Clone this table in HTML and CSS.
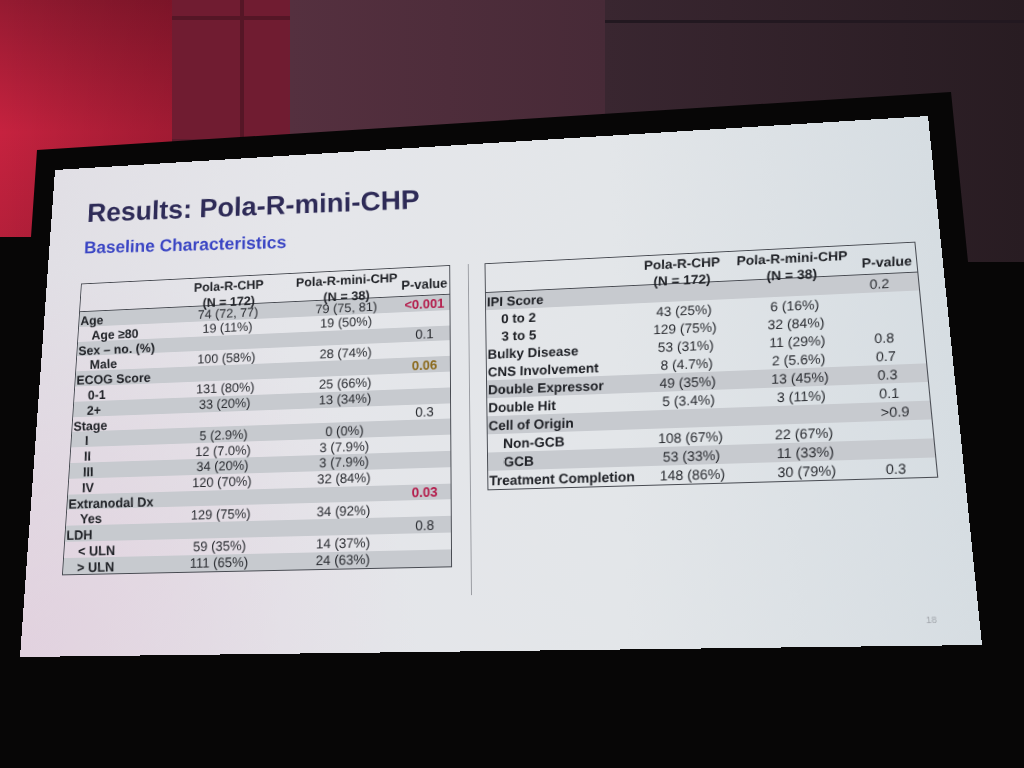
FILE: index.html
```html
<!DOCTYPE html>
<html lang="en">
<head>
<meta charset="utf-8">
<title>Results: Pola-R-mini-CHP</title>
<link rel="stylesheet" href="styles.css">
</head>
<body>
<div class="scene">
  <svg class="bg" viewBox="0 0 1024 768" width="1024" height="768" aria-hidden="true">
    <defs>
      <linearGradient id="red" x1="0" y1="0" x2="0" y2="1">
        <stop offset="0" stop-color="#951a31"/>
        <stop offset="0.55" stop-color="#c6223f"/>
        <stop offset="1" stop-color="#b51f3a"/>
      </linearGradient>
      <linearGradient id="redH" x1="0" y1="0" x2="1" y2="0">
        <stop offset="0" stop-color="#000" stop-opacity="0"/>
        <stop offset="1" stop-color="#200008" stop-opacity="0.22"/>
      </linearGradient>
      <linearGradient id="wallR" x1="0" y1="0" x2="1" y2="0">
        <stop offset="0" stop-color="#392630"/>
        <stop offset="1" stop-color="#281c22"/>
      </linearGradient>
      <linearGradient id="mauve" x1="0" y1="0" x2="1" y2="0">
        <stop offset="0" stop-color="#55303f"/>
        <stop offset="1" stop-color="#472a37"/>
      </linearGradient>
    </defs>
    <rect width="1024" height="768" fill="#2b1e25"/>
    <rect x="605" y="0" width="419" height="270" fill="url(#wallR)"/>
    <rect x="605" y="20" width="419" height="3" fill="#221820"/>
    <rect x="290" y="0" width="315" height="139" fill="url(#mauve)"/>
    <rect x="290" y="139" width="315" height="70" fill="#3b2430"/>
    <rect x="170" y="0" width="120" height="139" fill="#701c31"/>
    <rect x="240" y="0" width="4" height="139" fill="#551626"/>
    <rect x="170" y="16" width="120" height="4" fill="#551626"/>
    <rect x="170" y="139" width="120" height="70" fill="#5a1b2c"/>
    <rect x="0" y="0" width="172" height="240" fill="url(#red)"/>
    <rect x="0" y="0" width="172" height="240" fill="url(#redH)"/>
    <polygon points="37,150 951,92 968,262 1024,262 1024,768 0,768 0,237 31,237" fill="#070606"/>
  </svg>

  <div class="slide">
    <h1 class="title">Results: Pola-R-mini-CHP</h1>
    <h2 class="subtitle">Baseline Characteristics</h2>

    <div class="tables">
      <div class="tbl tbl-left">
        <div class="thead">
          <div class="c"></div>
          <div class="c">Pola-R-CHP<br>(N = 172)</div>
          <div class="c">Pola-R-mini-CHP<br>(N = 38)</div>
          <div class="c pv">P-value</div>
        </div>
        <div class="r g"><span class="lbl">Age</span><span class="v">74 (72, 77)</span><span class="v">79 (75, 81)</span><span class="p red">&lt;0.001</span></div>
        <div class="r"><span class="lbl ind">Age ≥80</span><span class="v">19 (11%)</span><span class="v">19 (50%)</span><span class="p"></span></div>
        <div class="r g"><span class="lbl">Sex – no. (%)</span><span class="v"></span><span class="v"></span><span class="p">0.1</span></div>
        <div class="r"><span class="lbl ind">Male</span><span class="v">100 (58%)</span><span class="v">28 (74%)</span><span class="p"></span></div>
        <div class="r g"><span class="lbl">ECOG Score</span><span class="v"></span><span class="v"></span><span class="p gold">0.06</span></div>
        <div class="r"><span class="lbl ind">0-1</span><span class="v">131 (80%)</span><span class="v">25 (66%)</span><span class="p"></span></div>
        <div class="r g"><span class="lbl ind">2+</span><span class="v">33 (20%)</span><span class="v">13 (34%)</span><span class="p"></span></div>
        <div class="r"><span class="lbl">Stage</span><span class="v"></span><span class="v"></span><span class="p">0.3</span></div>
        <div class="r g"><span class="lbl ind">I</span><span class="v">5 (2.9%)</span><span class="v">0 (0%)</span><span class="p"></span></div>
        <div class="r"><span class="lbl ind">II</span><span class="v">12 (7.0%)</span><span class="v">3 (7.9%)</span><span class="p"></span></div>
        <div class="r g"><span class="lbl ind">III</span><span class="v">34 (20%)</span><span class="v">3 (7.9%)</span><span class="p"></span></div>
        <div class="r"><span class="lbl ind">IV</span><span class="v">120 (70%)</span><span class="v">32 (84%)</span><span class="p"></span></div>
        <div class="r g"><span class="lbl">Extranodal Dx</span><span class="v"></span><span class="v"></span><span class="p red">0.03</span></div>
        <div class="r"><span class="lbl ind">Yes</span><span class="v">129 (75%)</span><span class="v">34 (92%)</span><span class="p"></span></div>
        <div class="r g"><span class="lbl">LDH</span><span class="v"></span><span class="v"></span><span class="p">0.8</span></div>
        <div class="r"><span class="lbl ind">&lt; ULN</span><span class="v">59 (35%)</span><span class="v">14 (37%)</span><span class="p"></span></div>
        <div class="r g"><span class="lbl ind">&gt; ULN</span><span class="v">111 (65%)</span><span class="v">24 (63%)</span><span class="p"></span></div>
      </div>

      <div class="divider"></div>

      <div class="tbl tbl-right">
        <div class="thead">
          <div class="c"></div>
          <div class="c">Pola-R-CHP<br>(N = 172)</div>
          <div class="c">Pola-R-mini-CHP<br>(N = 38)</div>
          <div class="c pv">P-value</div>
        </div>
        <div class="r g"><span class="lbl">IPI Score</span><span class="v"></span><span class="v"></span><span class="p">0.2</span></div>
        <div class="r"><span class="lbl ind">0 to 2</span><span class="v">43 (25%)</span><span class="v">6 (16%)</span><span class="p"></span></div>
        <div class="r"><span class="lbl ind">3 to 5</span><span class="v">129 (75%)</span><span class="v">32 (84%)</span><span class="p"></span></div>
        <div class="r"><span class="lbl">Bulky Disease</span><span class="v">53 (31%)</span><span class="v">11 (29%)</span><span class="p">0.8</span></div>
        <div class="r"><span class="lbl">CNS Involvement</span><span class="v">8 (4.7%)</span><span class="v">2 (5.6%)</span><span class="p">0.7</span></div>
        <div class="r g"><span class="lbl">Double Expressor</span><span class="v">49 (35%)</span><span class="v">13 (45%)</span><span class="p">0.3</span></div>
        <div class="r"><span class="lbl">Double Hit</span><span class="v">5 (3.4%)</span><span class="v">3 (11%)</span><span class="p">0.1</span></div>
        <div class="r g"><span class="lbl">Cell of Origin</span><span class="v"></span><span class="v"></span><span class="p">&gt;0.9</span></div>
        <div class="r"><span class="lbl ind">Non-GCB</span><span class="v">108 (67%)</span><span class="v">22 (67%)</span><span class="p"></span></div>
        <div class="r g"><span class="lbl ind">GCB</span><span class="v">53 (33%)</span><span class="v">11 (33%)</span><span class="p"></span></div>
        <div class="r"><span class="lbl">Treatment Completion</span><span class="v">148 (86%)</span><span class="v">30 (79%)</span><span class="p">0.3</span></div>
      </div>
    </div>

    <div class="pnum">18</div>
  </div>
</div>
</body>
</html>
```

FILE: styles.css
```css
html, body {
  margin: 0;
  padding: 0;
  background: #070606;
}

.scene {
  position: relative;
  width: 1024px;
  height: 768px;
  overflow: hidden;
}

.bg {
  display: block;
  width: 1024px;
  height: 768px;
}

/* the projected slide: flat 960x540 canvas, mapped onto the photographed screen */
.slide {
  position: absolute;
  left: 0;
  top: 0;
  width: 960px;
  height: 540px;
  box-sizing: border-box;
  padding-top: 37px;
  display: flex;
  flex-direction: column;
  transform-origin: 0 0;
  transform: matrix3d(0.830698, -0.066084, 0, -0.0000847813,
                      -0.068072, 0.794852, 0, -0.000162865,
                      0, 0, 1, 0,
                      55, 170, 0, 1);
  font-family: "Liberation Sans", Arial, sans-serif;
  background:
    radial-gradient(circle at 0% 100%, rgba(226, 204, 220, 0.7), rgba(226, 204, 220, 0) 38%),
    linear-gradient(90deg, #e1dfe5 0%, #e5e6ea 30%, #e3e6e9 65%, #d6dde2 100%);
}

.title {
  align-self: flex-start;
  margin: 0 0 0 42px;
  font-size: 31px;
  line-height: 36px;
  font-weight: 700;
  color: #2e2b57;
  transform-origin: 0 50%;
  transform: rotate(0.9deg) skewX(1.9deg);
}

.subtitle {
  align-self: flex-start;
  margin: 10px 0 0 41px;
  font-size: 20px;
  line-height: 24px;
  font-weight: 700;
  color: #3a45c4;
  transform-origin: 0 50%;
  transform: rotate(1.5deg) skewX(2.6deg);
}

.tables {
  display: flex;
  align-items: flex-start;
  margin-top: 30px;
  padding-left: 40px;
}

.tbl {
  box-sizing: border-box;
  border: 1px solid #474a51;
  font-size: 14px;
  color: #1f2126;
}

.tbl-left { width: 414px; }
.tbl-right { width: 444px; }

.tbl-left .thead,
.tbl-left .r {
  grid-template-columns: 96px 146px 116px 54px;
}

.tbl-right .thead,
.tbl-right .r {
  grid-template-columns: 160px 92px 132px 58px;
}

.tbl-left .thead > :nth-child(1),
.tbl-left .r > :nth-child(1) { transform: skewX(3.8deg); }
.tbl-left .thead > :nth-child(2),
.tbl-left .r > :nth-child(2) { transform: skewX(2.1deg); }
.tbl-left .thead > :nth-child(3),
.tbl-left .r > :nth-child(3) { transform: skewX(0.8deg); }

.tbl-right .thead > :nth-child(1),
.tbl-right .r > :nth-child(1) { transform: skewX(-1.6deg); }
.tbl-right .thead > :nth-child(2),
.tbl-right .r > :nth-child(2) { transform: skewX(-2.7deg); }
.tbl-right .thead > :nth-child(3),
.tbl-right .r > :nth-child(3) { transform: skewX(-3.9deg); }
.tbl-right .thead > :nth-child(4),
.tbl-right .r > :nth-child(4) { transform: skewX(-4.7deg); }

.divider {
  width: 1px;
  height: 348px;
  margin: 0 17px 0 19px;
  background: #9a9ca2;
}

.thead {
  display: grid;
  height: 32px;
  box-sizing: border-box;
  border-bottom: 1px solid #474a51;
  font-weight: 700;
}

.thead .c {
  line-height: 18px;
  padding-top: 0.5px;
  text-align: center;
  white-space: nowrap;
}

.thead .pv {
  padding-top: 9.6px;
}

.r {
  display: grid;
  align-items: center;
}

.tbl-left .r { height: 16.8px; }
.tbl-right .r { height: 19px; }

.r.g { background: #c7cacf; }

.lbl {
  font-weight: 700;
  padding-left: 1px;
  line-height: 14px;
  white-space: nowrap;
}

.tbl-left .lbl { padding-top: 3px; }

.lbl.ind { padding-left: 15px; }
.tbl-right .lbl.ind { padding-left: 16px; }

.v {
  text-align: center;
  line-height: 14px;
  white-space: nowrap;
  color: #292b30;
}

.p {
  text-align: center;
  line-height: 14px;
  white-space: nowrap;
  color: #292b30;
}

.tbl-right .p {
  text-align: left;
  padding-left: 10px;
}

.p.red {
  color: #b41d4c;
  font-weight: 700;
}

.p.gold {
  color: #8c6b1f;
  font-weight: 700;
}

.pnum {
  margin-top: auto;
  margin-right: 39px;
  margin-bottom: 18px;
  align-self: flex-end;
  font-size: 9px;
  line-height: 12px;
  color: #a3a7ad;
}
```
